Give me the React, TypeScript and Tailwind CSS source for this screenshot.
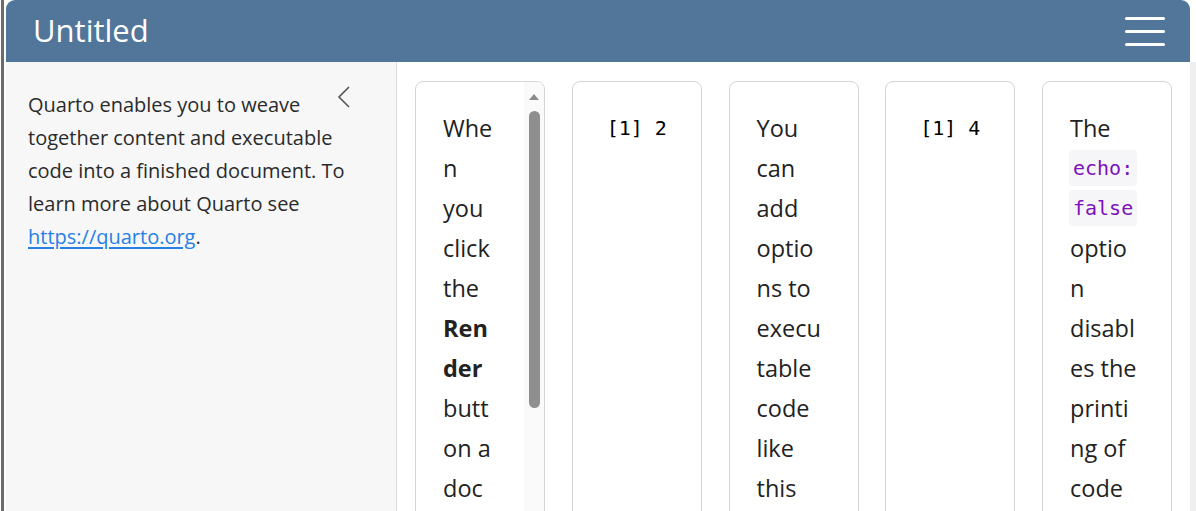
import { ReactNode } from 'react';

const sans = "font-['Open_Sans','Noto_Sans',sans-serif]";
const mono = "font-['DejaVu_Sans_Mono','Liberation_Mono',monospace]";

type Line = { text: string; bold?: boolean; code?: boolean };

const sidebarLines = [
  'Quarto enables you to weave',
  'together content and executable',
  'code into a finished document. To',
  'learn more about Quarto see',
];

const card1: Line[] = [
  { text: 'Whe' },
  { text: 'n' },
  { text: 'you' },
  { text: 'click' },
  { text: 'the' },
  { text: 'Ren', bold: true },
  { text: 'der', bold: true },
  { text: 'butt' },
  { text: 'on a' },
  { text: 'doc' },
];

const card3: Line[] = [
  { text: 'You' },
  { text: 'can' },
  { text: 'add' },
  { text: 'optio' },
  { text: 'ns to' },
  { text: 'execu' },
  { text: 'table' },
  { text: 'code' },
  { text: 'like' },
  { text: 'this' },
];

const card5: Line[] = [
  { text: 'The' },
  { text: 'echo:', code: true },
  { text: 'false', code: true },
  { text: 'optio' },
  { text: 'n' },
  { text: 'disabl' },
  { text: 'es the' },
  { text: 'printi' },
  { text: 'ng of' },
  { text: 'code' },
];

function Card({ children, scroll }: { children: ReactNode; scroll?: boolean }) {
  return (
    <div className="relative w-[130px] h-[560px] shrink-0 rounded-lg border border-[#d4d4d4] bg-white overflow-hidden">
      {children}
      {scroll && (
        <div className="absolute top-0 right-0 w-[20px] h-full bg-[#fafafa] flex flex-col items-center pt-[12px]">
          <div className="w-0 h-0 border-l-[5px] border-r-[5px] border-b-[6px] border-l-transparent border-r-transparent border-b-[#8a8a8a]" />
          <div className="mt-[11px] w-[11px] h-[297px] rounded-full bg-[#8f8f8f]" />
        </div>
      )}
    </div>
  );
}

function Prose({ lines }: { lines: Line[] }) {
  return (
    <div className={`${sans} pl-[27px] pt-[26px] text-[23.5px] leading-[40px] text-[#222]`}>
      {lines.map((l, i) =>
        l.code ? (
          <div key={i} className="h-[40px] flex items-center">
            <span className={`${mono} text-[20px] leading-[36px] text-[#7d12ba] bg-[#f6f6f8] rounded px-[4px] -ml-[1px]`}>
              {l.text}
            </span>
          </div>
        ) : (
          <div key={i} className={`whitespace-nowrap ${l.bold ? 'font-bold' : ''}`}>
            {l.text}
          </div>
        )
      )}
    </div>
  );
}

function Output({ text }: { text: string }) {
  return (
    <div className={`${mono} pt-[33px] text-center text-[20px] leading-[26px] text-black whitespace-pre`}>
      {text}
    </div>
  );
}

export default function App() {
  return (
    <div className="w-[1196px] h-[511px] overflow-hidden flex bg-white">
      <div className="w-[6px] shrink-0 flex">
        <div className="ml-[1px] w-[3px] bg-[#6b6b6b]" />
      </div>
      <div className="flex-1 flex flex-col min-w-0">
        <div className="flex h-[62px] shrink-0">
          <header className="flex-1 h-[62px] bg-[#51769a] rounded-t-[9px] flex items-center justify-between pl-[27px] pr-[25px]">
            <h1 className={`${sans} text-white text-[31px] leading-none pb-[1px]`}>Untitled</h1>
            <div className="w-[40px] flex flex-col gap-[10px] pt-[1px]">
              <div className="h-[3px] bg-white rounded-sm" />
              <div className="h-[3px] bg-white rounded-sm" />
              <div className="h-[3px] bg-white rounded-sm" />
            </div>
          </header>
          <div className="w-[6px] shrink-0" />
        </div>
        <div className="flex flex-1 min-h-0">
          <aside className="relative w-[391px] shrink-0 bg-[#f7f7f7] border-r border-[#dcdcdc] pl-[22px] pt-[26px]">
            <svg className="absolute left-[331px] top-[24px]" width="14" height="22" viewBox="0 0 14 22">
              <polyline points="12,1 2,11 12,21" fill="none" stroke="#555" strokeWidth="1.6" />
            </svg>
            <div className={`${sans} text-[20px] leading-[33px] text-[#2b2b2b]`}>
              {sidebarLines.map((l) => (
                <div key={l} className="whitespace-nowrap">{l}</div>
              ))}
              <div>
                <a className="text-[#2780e3] underline underline-offset-[3px]" href="#">https://quarto.org</a>.
              </div>
            </div>
          </aside>
          <main className="flex-1 min-w-0 flex gap-[26.75px] pl-[18px] pt-[19px]">
            <Card scroll>
              <Prose lines={card1} />
            </Card>
            <Card>
              <Output text="[1] 2" />
            </Card>
            <Card>
              <Prose lines={card3} />
            </Card>
            <Card>
              <Output text="[1] 4" />
            </Card>
            <Card>
              <Prose lines={card5} />
            </Card>
          </main>
          <div className="w-[6px] shrink-0 bg-[#efefef]" />
        </div>
      </div>
    </div>
  );
}
